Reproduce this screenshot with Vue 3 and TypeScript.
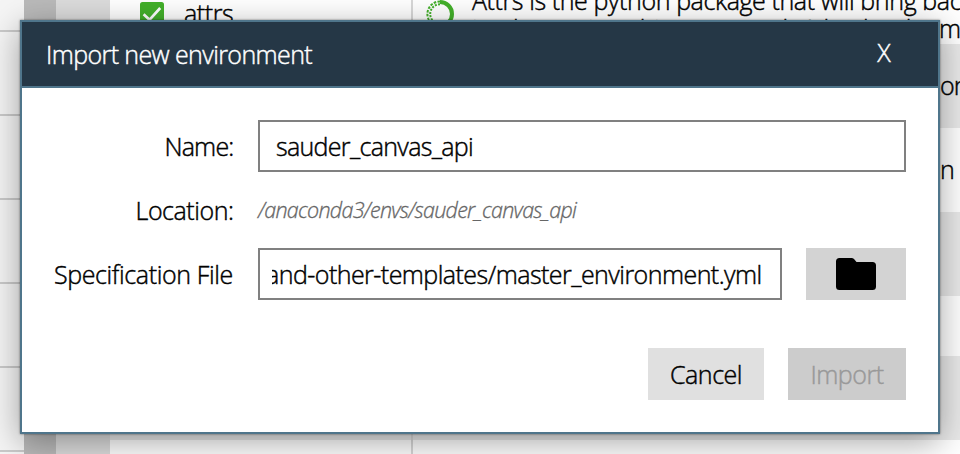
<script setup lang="ts">
import { ref, onMounted } from 'vue'

const name = ref('sauder_canvas_api')
const specFile = ref('and-other-templates/master_environment.yml')
const specInput = ref<HTMLInputElement | null>(null)

interface Row { id: number; height: number; shaded: boolean; tail: string }
const rows: Row[] = [
  { id: 1, height: 84, shaded: true, tail: 'or' },
  { id: 2, height: 84, shaded: false, tail: 'n' },
  { id: 3, height: 84, shaded: true, tail: '' },
  { id: 4, height: 60, shaded: false, tail: '' },
  { id: 5, height: 84, shaded: true, tail: '' },
  { id: 6, height: 14, shaded: false, tail: '' },
]

onMounted(() => {
  // Keep the end of a long path in view.
  if (specInput.value) specInput.value.scrollLeft = specInput.value.scrollWidth
})
</script>

<template>
  <div class="screen">
    <div class="backdrop">
      <div class="environments">
        <div v-for="n in 6" :key="n" class="environment"></div>
      </div>
      <div class="splitter"></div>
      <div class="gutter"></div>
      <div class="packages">
        <div class="package first">
          <div class="package-name">
            <svg class="check" viewBox="0 0 24 24">
              <rect width="24" height="24" rx="2.5" fill="#43b02a" />
              <path d="M3.6 12.2l5.9 5.6L20.2 6" fill="none" stroke="#fff" stroke-width="2.7" />
            </svg>
            <span class="label">attrs</span>
          </div>
          <div class="package-info">
            <svg class="ring" viewBox="0 0 28 28">
              <path d="M14 2a12 12 0 0 1 0 24" fill="none" stroke="#43b02a" stroke-width="4" />
              <path d="M14 1.4a12.6 12.6 0 0 0 0 25.2" fill="none" stroke="#43b02a" stroke-width="2" stroke-dasharray="2.6 1.3" />
              <path d="M14 4.2a9.8 9.8 0 0 0 0 19.6" fill="none" stroke="#43b02a" stroke-width="2" stroke-dasharray="2 1.3" />
            </svg>
            <p class="description">Attrs is the python package that will bring back<br><span class="second">implementing object protocols (aka dunder me</span></p>
          </div>
        </div>
        <div
          v-for="row in rows"
          :key="row.id"
          class="package"
          :class="{ shaded: row.shaded }"
          :style="{ height: row.height + 'px' }"
        >
          <div class="package-name"></div>
          <div class="package-info"><span class="tail">{{ row.tail }}</span></div>
        </div>
      </div>
    </div>

    <form class="dialog" @submit.prevent>
      <header class="titlebar">
        <h1 class="title">Import new environment</h1>
        <button class="close" type="button">X</button>
      </header>
      <div class="body">
        <div class="fields">
          <label class="caption name-caption" for="env-name">Name:</label>
          <input id="env-name" v-model="name" class="input name-input">
          <span class="caption location-caption">Location:</span>
          <span class="location">/anaconda3/envs/{{ name }}</span>
          <label class="caption spec-caption" for="env-spec">Specification File</label>
          <div class="file">
            <input id="env-spec" ref="specInput" v-model="specFile" class="input spec-input">
            <button class="browse" type="button">
              <svg viewBox="0 0 40 32" width="40" height="32">
                <path d="M3.5 0H15.5Q17 0 18 1L20.5 4H36.5A3.5 3.5 0 0 1 40 7.5V28.5A3.5 3.5 0 0 1 36.5 32H3.5A3.5 3.5 0 0 1 0 28.5V3.5A3.5 3.5 0 0 1 3.5 0Z" fill="#000" />
              </svg>
            </button>
          </div>
        </div>
        <div class="actions">
          <button class="action cancel" type="button">Cancel</button>
          <button class="action import" type="submit" disabled>Import</button>
        </div>
      </div>
    </form>
  </div>
</template>

<style>
body { overflow: hidden; }
</style>

<style scoped>
* { box-sizing: border-box; }
.screen {
  position: relative;
  width: 960px;
  height: 454px;
  overflow: hidden;
  color: #000;
  font: 300 25px/28px "Open Sans", "Noto Sans", sans-serif;
  letter-spacing: -0.8px;
  -webkit-text-stroke: 0.45px currentColor;
}
button, input { font: inherit; letter-spacing: inherit; color: inherit; border: 0; margin: 0; padding: 0; border-radius: 0; }
.backdrop { display: flex; height: 454px; background: #fff; }
.environments { width: 24px; background: #f5f5f5; padding-top: 30px; }
.environment { height: 84px; border-top: 2px solid #cacaca; }
.splitter { width: 32px; background: #bababa; }
.gutter { width: 54px; background: #dcdcdc; }
.packages { width: 850px; overflow: hidden; }
.package { display: grid; grid-template-columns: 303px 1fr; }
.package.first { height: 44px; }
.package.shaded { background: #e9e9e9; }
.package-name { display: flex; border-right: 2px solid #d8d8d8; padding: 2px 0 0 30px; }
.check { width: 24px; height: 24px; flex: none; }
.label { margin: -3px 0 0 20px; letter-spacing: -0.4px; }
.package-info { display: flex; white-space: nowrap; }
.ring { width: 28px; height: 28px; flex: none; margin-left: 13px; }
.description { margin: -14px 0 0 18px; letter-spacing: -0.4px; }
.second { letter-spacing: -0.55px; }
.tail { margin: 27px 0 0 527px; }
.dialog {
  position: absolute;
  left: 20px;
  top: 20px;
  width: 920px;
  height: 414px;
  background: #fff;
  border: 2px solid #4f758b;
  box-shadow: 0 0 2px rgba(0, 0, 0, 0.5), 0 8px 32px rgba(0, 0, 0, 0.36);
}
.titlebar {
  display: flex;
  justify-content: space-between;
  align-items: center;
  height: 66px;
  padding: 0 48px 0 24px;
  background: #253746;
  border-bottom: 2px solid #4f758b;
  color: #fff;
}
.title { margin: 0; font: inherit; letter-spacing: -0.6px; }
.close { background: none; padding-bottom: 5px; }
.body { padding: 32px 32px 0; }
.fields {
  display: grid;
  grid-template-columns: 180px 648px;
  column-gap: 24px;
  grid-template-rows: 52px 28px 52px;
  row-gap: 24px;
  align-items: center;
}
.caption { text-align: right; white-space: nowrap; justify-self: end; }
.name-caption { margin-right: 0.5px; }
.location-caption { margin-right: 0.5px; letter-spacing: -0.45px; }
.spec-caption { margin-right: 1px; letter-spacing: -0.36px; }
.input { height: 52px; border: 2px solid #808080; background: #fff; outline: 0; min-width: 0; }
.name-input { width: 648px; padding: 0 16px; letter-spacing: -0.68px; }
.location { color: #666; font-size: 21.5px; font-style: italic; letter-spacing: -0.72px; -webkit-text-stroke-width: 0.3px; }
.file { display: flex; gap: 24px; }
.spec-input { width: 524px; padding: 0 18px 0 12px; letter-spacing: -0.54px; }
.browse { width: 100px; height: 52px; display: flex; align-items: center; justify-content: center; background: #d3d3d3; }
.actions { display: flex; justify-content: flex-end; gap: 24px; margin-top: 48px; }
.action { height: 52px; text-align: center; letter-spacing: -0.5px; }
.cancel { width: 116px; background: #e0e0e0; }
.import { width: 118px; background: #ccc; color: #999; }
</style>
